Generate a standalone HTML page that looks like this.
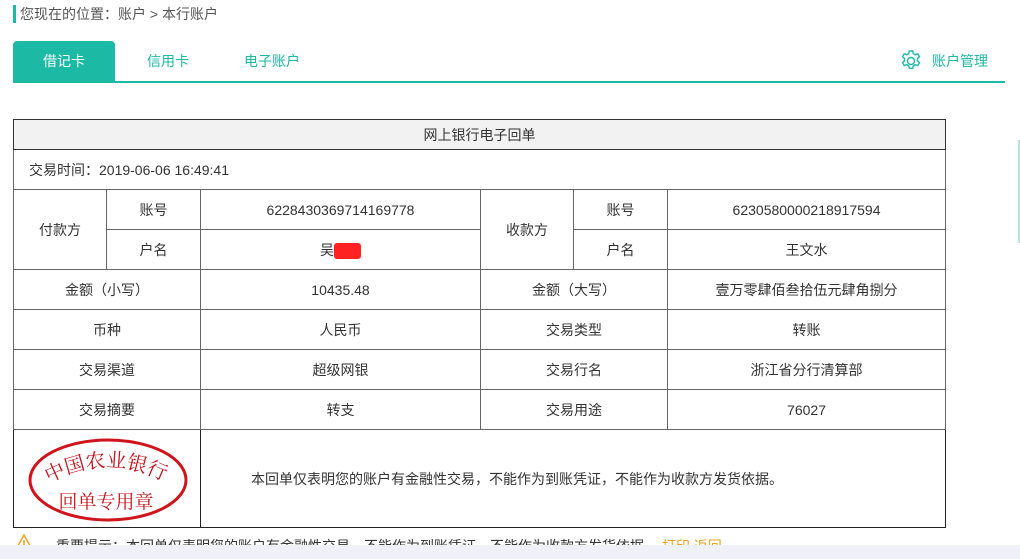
<!DOCTYPE html>
<html><head><meta charset="utf-8"><style>
*{margin:0;padding:0;box-sizing:border-box}
body{width:1020px;height:559px;overflow:hidden;background:#fff;font-family:"Liberation Sans","Noto Sans CJK SC",sans-serif;color:#333;font-size:14px;position:relative}
.a{position:absolute}
table{position:absolute;left:13px;top:119px;width:932px;border-collapse:collapse;table-layout:fixed}
td{border:1px solid #666;text-align:center;font-size:14px;color:#333;height:40px;padding:0}
</style></head><body>
<div class="a" style="left:13px;top:5px;width:3px;height:18px;background:#1cb9a5"></div>
<div class="a" style="left:20px;top:5px;font-size:14px;color:#555;line-height:18px">您现在的位置：账户 &gt; 本行账户</div>
<div class="a" style="left:13px;top:41px;width:102px;height:40px;background:#1cb9a5;border-radius:4px 4px 0 0;color:#fff;text-align:center;line-height:40px">借记卡</div>
<div class="a" style="left:147px;top:41px;line-height:40px;color:#1cb9a5">信用卡</div>
<div class="a" style="left:244px;top:41px;line-height:40px;color:#1cb9a5">电子账户</div>
<div class="a" style="left:13px;top:81px;width:992px;height:2px;background:#1cb9a5"></div>
<svg class="a" style="left:899px;top:49px" width="24" height="24" viewBox="0 0 24 24" fill="none" stroke="#1cb9a5" stroke-width="1.4"><circle cx="12" cy="12" r="3.5"/><path d="M10.3 2h3.4l.6 2.6 2 1.1 2.5-.9 1.7 2.9-2 1.8v2.3l2 1.8-1.7 2.9-2.5-.9-2 1.1-.6 2.6h-3.4l-.6-2.6-2-1.1-2.5.9-1.7-2.9 2-1.8v-2.3l-2-1.8 1.7-2.9 2.5.9 2-1.1z"/></svg>
<div class="a" style="left:932px;top:51px;color:#1cb9a5;line-height:20px">账户管理</div>
<div class="a" style="left:1018px;top:140px;width:2px;height:103px;background:#b5e6de"></div>
<table>
<colgroup><col style="width:93px"><col style="width:94px"><col style="width:280px"><col style="width:93px"><col style="width:94px"><col style="width:278px"></colgroup>
<tr><td colspan="6" style="height:30px;background:#f2f2f2;border-color:#333">网上银行电子回单</td></tr>
<tr><td colspan="6" style="text-align:left;padding-left:15px">交易时间：2019-06-06 16:49:41</td></tr>
<tr><td rowspan="2">付款方</td><td>账号</td><td>6228430369714169778</td><td rowspan="2">收款方</td><td>账号</td><td>6230580000218917594</td></tr>
<tr><td>户名</td><td>吴<span style="display:inline-block;width:27px;height:16px;background:#f22;border-radius:3px;vertical-align:-4px"></span></td><td>户名</td><td>王文水</td></tr>
<tr><td colspan="2">金额（小写）</td><td>10435.48</td><td colspan="2">金额（大写）</td><td>壹万零肆佰叁拾伍元肆角捌分</td></tr>
<tr><td colspan="2">币种</td><td>人民币</td><td colspan="2">交易类型</td><td>转账</td></tr>
<tr><td colspan="2">交易渠道</td><td>超级网银</td><td colspan="2">交易行名</td><td>浙江省分行清算部</td></tr>
<tr><td colspan="2">交易摘要</td><td>转支</td><td colspan="2">交易用途</td><td>76027</td></tr>
<tr><td colspan="2" style="height:98px;border-color:#222"></td><td colspan="4" style="text-align:left;padding-left:50px;border-color:#222">本回单仅表明您的账户有金融性交易，不能作为到账凭证，不能作为收款方发货依据。</td></tr>
</table>
<svg class="a" style="left:24px;top:436px" width="168" height="88" viewBox="0 0 168 88">
<defs><path id="arc" d="M16 52 Q84 10 152 52"/></defs>
<ellipse cx="84" cy="44" rx="78" ry="40" fill="none" stroke="#d0141c" stroke-width="3"/>
<text font-family="Noto Serif CJK SC,serif" font-size="20" fill="#c4141c"><textPath href="#arc" startOffset="10">中国农业银行</textPath></text>
<text x="82" y="72" text-anchor="middle" font-family="Noto Serif CJK SC,serif" font-size="19" fill="#c4141c">回单专用章</text>
</svg>
<svg class="a" style="left:14px;top:534px" width="20" height="18" viewBox="0 0 20 18"><path d="M10 1L19 17H1z" fill="none" stroke="#f0a020" stroke-width="1.5"/><path d="M10 6v6" stroke="#f0a020" stroke-width="1.5"/></svg>
<div class="a" style="left:56px;top:537px;font-size:14px;color:#333;line-height:18px;white-space:nowrap">重要提示：本回单仅表明您的账户有金融性交易，不能作为到账凭证，不能作为收款方发货依据。 <span style="color:#f0a020">打印 返回</span></div>
<div class="a" style="left:0;top:545px;width:1020px;height:14px;background:#eef2f8"></div>
</body></html>
